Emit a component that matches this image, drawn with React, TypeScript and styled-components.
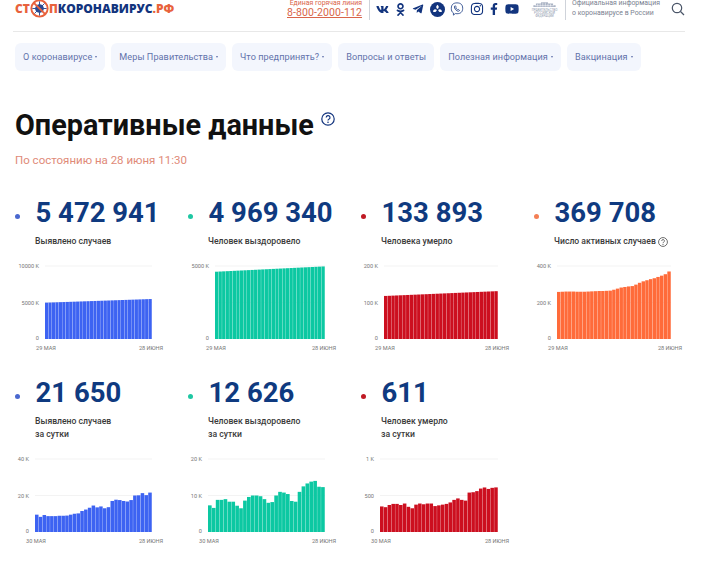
import * as React from 'react';
import styled, { createGlobalStyle } from 'styled-components';
import { FaVk, FaOdnoklassniki, FaTelegramPlane, FaInstagram, FaFacebookF, FaYoutube } from 'react-icons/fa';

const GlobalStyle = createGlobalStyle`
  html, body { margin: 0; padding: 0; background: #fff; overflow: hidden; }
  body { font-family: Roboto, "Liberation Sans", sans-serif; }
`;

const Page = styled.div`
  width: 720px;
  height: 567px;
  overflow: hidden;
  box-sizing: border-box;
  padding-left: 15px;
`;

const Header = styled.header`
  width: 672px;
  height: 32px;
  margin-left: -2px;
  padding-left: 2px;
  box-sizing: border-box;
  border-bottom: 1px solid #e8e8e8;
  display: flex;
  align-items: flex-start;
`;

const Logo = styled.div`
  width: 272px;
  height: 17px;
  display: flex;
  align-items: center;
  font-family: "Open Sans", Roboto, sans-serif;
  font-weight: 800;
  font-size: 12px;
  color: #12347e;
  svg { margin: 0; flex: none; }
`;

const LogoPart = styled.span<{ $tone: string }>`
  color: ${(props) => props.$tone};
`;

const Hotline = styled.div`
  width: 84px;
  box-sizing: border-box;
  padding-left: 2px;
  flex: none;
`;

const HotlineLabel = styled.div`
  font-size: 6.9px;
  line-height: 6px;
  color: #d9654a;
  text-align: right;
  padding-right: 7px;
  white-space: nowrap;
`;

const Phone = styled.div`
  font-size: 10.5px;
  line-height: 13px;
  letter-spacing: 0.1px;
  color: #d9654a;
  text-decoration: underline;
  text-underline-offset: 1px;
`;

const Divider = styled.div<{ $space: number }>`
  width: 1px;
  height: 20px;
  background: #cfd3da;
  flex: none;
  margin-right: ${(props) => props.$space}px;
`;

const Socials = styled.div`
  display: flex;
  align-items: center;
  height: 18px;
  width: 150px;
  flex: none;
  color: #12347e;
`;

const SocialSlot = styled.span<{ $w: number }>`
  width: ${(props) => props.$w}px;
  flex: none;
  display: flex;
  justify-content: center;
`;

const GovLogo = styled.div`
  width: 41px;
  box-sizing: border-box;
  padding: 1px 6px 0;
  flex: none;
  display: flex;
  flex-direction: column;
  align-items: center;
  gap: 2px;
  color: #8f9aae;
  font-size: 3.1px;
  line-height: 3.2px;
  text-align: center;
`;

const GovNote = styled.div`
  font-size: 6.9px;
  line-height: 10px;
  color: #7a8190;
  width: 99px;
  flex: none;
  margin-top: -2px;
`;

const SearchIcon = styled.svg`
  flex: none;
  margin-top: 2px;
`;

const Nav = styled.nav`
  display: flex;
  gap: 6px;
  margin-top: 11px;
`;

const NavPill = styled.div`
  height: 28px;
  padding: 0 8px;
  display: flex;
  align-items: center;
  gap: 3px;
  background: #f3f6fd;
  border-radius: 6px;
  font-size: 9.1px;
  letter-spacing: 0.07px;
  color: #6272ab;
  white-space: nowrap;
`;

const Caret = styled.i`
  display: block;
  width: 0;
  height: 0;
  border-left: 1.5px solid transparent;
  border-right: 1.5px solid transparent;
  border-top: 2.5px solid #6272ab;
`;

const TitleRow = styled.div`
  display: flex;
  align-items: flex-start;
  gap: 7px;
  margin-top: 35px;
`;

const Title = styled.h1`
  margin: 0;
  font-size: 28.8px;
  line-height: 38px;
  font-weight: 700;
  color: #111;
`;

const HelpSlot = styled.span`
  display: block;
  margin-top: 6px;
  flex: none;
`;

const Stamp = styled.div`
  margin-top: 8px;
  font-size: 11.5px;
  line-height: 16px;
  color: #e08a78;
`;

const Grid = styled.div`
  display: grid;
  grid-template-columns: repeat(4, 173px);
  row-gap: 26px;
  margin-top: 29px;
`;

const Card = styled.div`
  display: flex;
  flex-direction: column;
`;

const NumberRow = styled.div`
  display: flex;
  align-items: center;
  height: 32px;
`;

const Dot = styled.span<{ $tone: string }>`
  width: 5px;
  height: 5px;
  margin: 6px 15.5px 0 0;
  border-radius: 50%;
  flex: none;
  background: ${(props) => props.$tone};
`;

const Value = styled.div`
  font-size: 27.5px;
  line-height: 32px;
  font-weight: 700;
  color: #0f3a80;
  white-space: nowrap;
`;

const Label = styled.div<{ $lines: number }>`
  margin: 6px 0 0 20px;
  height: ${(props) => props.$lines * 13}px;
  font-size: 8.65px;
  line-height: 13px;
  font-weight: 500;
  color: #3a3a3a;
  white-space: nowrap;
  display: flex;
  align-items: center;
  gap: 2px;
`;

const LabelLines = styled.div`
  display: flex;
  flex-direction: column;
`;

const ChartBox = styled.svg`
  display: block;
  margin-top: 11px;
`;

const AxisText = styled.text`
  font-family: Roboto, sans-serif;
  font-size: 5.6px;
  fill: #777;
`;

const Help = ({ size, tone }: { size: number; tone: string }) => (
  <svg width={size} height={size} viewBox="0 0 14 14" display="block">
    <circle cx="7" cy="7" r="6.2" fill="none" stroke={tone} strokeWidth="1.2" />
    <path d="M5.2 5.5a1.9 1.9 0 1 1 2.7 1.7c-.6.3-.9.6-.9 1.3" fill="none" stroke={tone} strokeWidth="1.2" />
    <circle cx="7" cy="10.3" r=".8" fill={tone} />
  </svg>
);

const ramp = (from: number, to: number, count: number) =>
  Array.from({ length: count }, (_, i) => from + ((to - from) * i) / (count - 1));

type ChartProps = {
  data: number[];
  max: number;
  ticks: string[];
  from: string;
  left: number;
  tone: string;
};

const Chart = ({ data, max, ticks, from, left, tone }: ChartProps) => {
  const right = 137;
  const top = 7;
  const bottom = 80;
  const step = (right - left) / data.length;
  const mid = (top + bottom) / 2;
  return (
    <ChartBox width="173" height="92" viewBox="0 0 173 92">
      <line x1={left} x2={right} y1={top} y2={top} stroke="#f3f3f3" />
      <line x1={left} x2={right} y1={mid} y2={mid} stroke="#f3f3f3" />
      <AxisText x={left - 6} y={top + 2} textAnchor="end">{ticks[0]}</AxisText>
      <AxisText x={left - 6} y={mid + 2} textAnchor="end">{ticks[1]}</AxisText>
      <AxisText x={left - 6} y={bottom + 1} textAnchor="end">0</AxisText>
      {data.map((v, i) => {
        const h = (v / max) * (bottom - top);
        return <rect key={i} x={left + i * step} y={bottom - h} width={step - 0.25} height={h} fill={tone} />;
      })}
      <AxisText x={left + 1} y={91} textAnchor="middle">{from}</AxisText>
      <AxisText x={right - 1} y={91} textAnchor="middle">28 ИЮНЯ</AxisText>
    </ChartBox>
  );
};

const BLUE = { dot: '#4a68cf', bar: '#3d63f2' };
const GREEN = { dot: '#1fc7a3', bar: '#0cc8a2' };
const RED = { dot: '#c01a24', bar: '#cc0f1f' };
const ORANGE = { dot: '#f47f55', bar: '#ff6b3a' };

const activeCases = [
  258, 259, 260, 260, 260, 259, 259, 259, 260, 261, 262, 263, 263, 264, 265, 270, 276, 282, 285, 288, 290, 298, 308,
  316, 322, 328, 333, 340, 347, 355, 370,
];
const dailyCases = [
  9.5, 8.3, 9.3, 8.7, 8.7, 8.7, 8.9, 8.9, 9, 9.5, 10, 10.2, 11.5, 12.3, 13.3, 14.5, 13.5, 14, 13, 13.6, 17, 17.7, 17.5,
  17, 16.7, 17.5, 20, 20.1, 21.3, 20.2, 21.6,
];
const dailyRecovered = [
  7.3, 6.6, 8.8, 8.8, 9, 8.3, 8.3, 7.2, 6.5, 8.6, 9.6, 10, 10, 9.8, 9, 8, 8.2, 10, 11, 10.8, 10.4, 8.5, 8.3, 11, 12.5,
  13.3, 13.8, 14, 12.4, 12.3,
];
const dailyDeaths = [
  350, 340, 370, 385, 385, 370, 390, 345, 325, 375, 390, 380, 390, 390, 355, 365, 375, 385, 405, 440, 460, 440, 430,
  540, 545, 560, 595, 610, 590, 605, 611,
];

const navItems = [
  { title: 'О коронавирусе', menu: true },
  { title: 'Меры Правительства', menu: true },
  { title: 'Что предпринять?', menu: true },
  { title: 'Вопросы и ответы', menu: false },
  { title: 'Полезная информация', menu: true },
  { title: 'Вакцинация', menu: true },
];

const cards = [
  { value: '5 472 941', label: ['Выявлено случаев'], tone: BLUE, data: ramp(4980, 5473, 31), max: 10000, ticks: ['10000 K', '5000 K'], from: '29 МАЯ', left: 30 },
  { value: '4 969 340', label: ['Человек выздоровело'], tone: GREEN, data: ramp(4610, 4969, 31), max: 5000, ticks: ['5000 K', ''], from: '29 МАЯ', left: 27 },
  { value: '133 893', label: ['Человека умерло'], tone: RED, data: ramp(118, 131, 31), max: 200, ticks: ['200 K', '100 K'], from: '29 МАЯ', left: 23 },
  { value: '369 708', label: ['Число активных случаев'], help: true, tone: ORANGE, data: activeCases, max: 400, ticks: ['400 K', '200 K'], from: '29 МАЯ', left: 23 },
  { value: '21 650', label: ['Выявлено случаев', 'за сутки'], tone: BLUE, data: dailyCases, max: 40, ticks: ['40 K', '20 K'], from: '30 МАЯ', left: 20 },
  { value: '12 626', label: ['Человек выздоровело', 'за сутки'], tone: GREEN, data: dailyRecovered, max: 20, ticks: ['20 K', '10 K'], from: '30 МАЯ', left: 20 },
  { value: '611', label: ['Человек умерло', 'за сутки'], tone: RED, data: dailyDeaths, max: 1000, ticks: ['1 K', '500'], from: '30 МАЯ', left: 19 },
];

const LogoVirus = () => (
  <svg width="19" height="19" viewBox="0 0 20 20">
    <circle cx="10" cy="10" r="8.6" fill="#fff" stroke="#e8623c" strokeWidth="2" />
    <circle cx="10" cy="10" r="4.6" fill="#2a4a90" />
    <path d="M10 2.5v15M2.5 10h15M4.7 4.7l10.6 10.6M15.3 4.7L4.7 15.3" stroke="#2a4a90" strokeWidth="1" />
    <path d="M4 4l12 12" stroke="#e8623c" strokeWidth="2" />
  </svg>
);

const FlowerIcon = () => (
  <svg width="15" height="15" viewBox="0 0 16 16">
    <circle cx="8" cy="8" r="8" fill="#12347e" />
    <path d="M8 7.4C6.4 6.6 6 4.6 8 3c2 1.600 1.600 3.600 0 4.400zM7.300 8.400C7 10.200 5.300 11.300 3.300 10.300 3.200 8 5.400 7 7.300 8.400zM8.700 8.400C10.600 7 12.800 8 12.700 10.300 10.700 11.300 9 10.200 8.700 8.400z" fill="#fff" />
  </svg>
);

const ViberIcon = () => (
  <svg width="14" height="14" viewBox="0 0 16 16" fill="none" stroke="#12347e" strokeWidth="0.9">
    <path d="M8 1c3.900 0 6.500 1.800 6.500 6.200S11.900 13.400 8 13.400c-.7 0-1.300 0-1.900-.2L3.900 15v-2.500C2.200 11.600 1.500 9.800 1.500 7.200 1.500 2.800 4.100 1 8 1z" />
    <path d="M5.300 4.600c.6-.5 1-.4 1.300.2l.4.800c.2.400 0 .7-.4 1 .3 1 1 1.800 2 2.200.4-.4.700-.6 1.100-.3l.8.600c.5.400.4.800-.1 1.200-.8.600-2 .2-3.300-.8C5.500 8.200 4.500 5.400 5.300 4.600z" />
  </svg>
);

const App = () => {
  return (
    <Page>
      <GlobalStyle />
      <Header>
        <Logo>
          <LogoPart $tone="#e8623c">СТ</LogoPart>
          <LogoVirus />
          <LogoPart $tone="#e8623c">П</LogoPart>
          КОРОНАВИРУС
          <LogoPart $tone="#e8623c">.РФ</LogoPart>
        </Logo>
        <Hotline>
          <HotlineLabel>Единая горячая линия</HotlineLabel>
          <Phone>8-800-2000-112</Phone>
        </Hotline>
        <Divider $space={4} />
        <Socials>
          <SocialSlot $w={16}><FaVk size={13} /></SocialSlot>
          <SocialSlot $w={20}><FaOdnoklassniki size={13} /></SocialSlot>
          <SocialSlot $w={16}><FaTelegramPlane size={12} /></SocialSlot>
          <SocialSlot $w={22}><FlowerIcon /></SocialSlot>
          <SocialSlot $w={18}><ViberIcon /></SocialSlot>
          <SocialSlot $w={22}><FaInstagram size={14} /></SocialSlot>
          <SocialSlot $w={12}><FaFacebookF size={12} /></SocialSlot>
          <SocialSlot $w={24}><FaYoutube size={14} /></SocialSlot>
        </Socials>
        <GovLogo>
          <svg width="27" height="6" viewBox="0 0 28 7">
            <path d="M1 7V5h3V3h6V1.500h8V3h6v2h3v2z" fill="#aab3c4" />
            <path d="M3 5.500h22M6 3.500v3M9 3.500v3M12 2v4.500M15 2v4.500M18 3.500v3M21 3.500v3" stroke="#fff" strokeWidth=".6" />
          </svg>
          ПРАВИТЕЛЬСТВО РОССИЙСКОЙ ФЕДЕРАЦИИ
        </GovLogo>
        <Divider $space={6} />
        <GovNote>
          Официальная информация
          <br />о коронавирусе в России
        </GovNote>
        <SearchIcon width="14" height="14" viewBox="0 0 14 14" fill="none" stroke="#4a5568" strokeWidth="1.2">
          <circle cx="6" cy="6" r="4.7" />
          <path d="M9.500 9.500L13 13" />
        </SearchIcon>
      </Header>
      <Nav>
        {navItems.map((item) => (
          <NavPill key={item.title}>
            {item.title}
            {item.menu && <Caret />}
          </NavPill>
        ))}
      </Nav>
      <TitleRow>
        <Title>Оперативные данные</Title>
        <HelpSlot>
          <Help size={14} tone="#12347e" />
        </HelpSlot>
      </TitleRow>
      <Stamp>По состоянию на 28 июня 11:30</Stamp>
      <Grid>
        {cards.map((card) => (
          <Card key={card.value}>
            <NumberRow>
              <Dot $tone={card.tone.dot} />
              <Value>{card.value}</Value>
            </NumberRow>
            <Label $lines={card.label.length}>
              <LabelLines>
                {card.label.map((line) => (
                  <span key={line}>{line}</span>
                ))}
              </LabelLines>
              {card.help && <Help size={10} tone="#555" />}
            </Label>
            <Chart data={card.data} max={card.max} ticks={card.ticks} from={card.from} left={card.left} tone={card.tone.bar} />
          </Card>
        ))}
      </Grid>
    </Page>
  );
};

export default App;
